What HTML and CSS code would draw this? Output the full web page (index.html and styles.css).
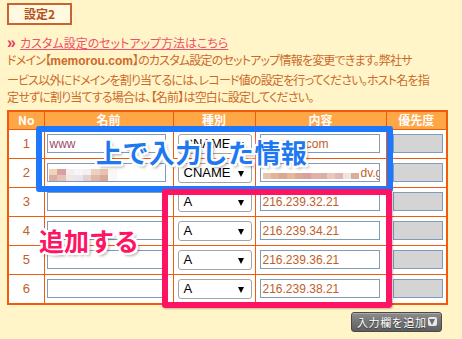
FILE: index.html
```html
<!DOCTYPE html>
<html lang="ja">
<head>
    <meta charset="UTF-8">
    <title>設定2</title>
    <link rel="stylesheet" href="styles.css">
</head>
<body>
    <div class="page">
        <div class="title">設定2</div>
        <p class="guide"><span class="guide-mark">»</span><a href="#">カスタム設定のセットアップ方法はこちら</a></p>
        <p class="desc">ドメイン【<b>memorou.com</b>】のカスタム設定のセットアップ情報を変更できます。弊社サ<br>ービス以外にドメインを割り当てるには、レコード値の設定を行ってください。ホスト名を指<br>定せずに割り当てする場合は、【名前】は空白に設定してください。</p>

        <table class="records">
            <colgroup>
                <col class="col-no">
                <col class="col-name">
                <col class="col-type">
                <col class="col-value">
                <col class="col-prio">
            </colgroup>
            <tr>
                <th>No</th>
                <th>名前</th>
                <th>種別</th>
                <th>内容</th>
                <th>優先度</th>
            </tr>
            <tr>
                <td class="num">1</td>
                <td><div class="field name-www">www</div></td>
                <td><div class="select">CNAME</div></td>
                <td><div class="field value"><span class="blur-short"></span>gle.com</div></td>
                <td><div class="field prio"></div></td>
            </tr>
            <tr>
                <td class="num">2</td>
                <td><div class="field"><div class="mosaic mosaic-name"><i></i><i></i><i></i><i></i><i></i><i></i><i></i><i></i><i></i><i></i><i></i><i></i><i></i><i></i><i></i><i></i></div></div></td>
                <td><div class="select">CNAME</div></td>
                <td><div class="field value"><div class="mosaic mosaic-value"><i></i><i></i><i></i><i></i><i></i><i></i><i></i><i></i><i></i><i></i><i></i><i></i></div>dv.g</div></td>
                <td><div class="field prio"></div></td>
            </tr>
            <tr>
                <td class="num">3</td>
                <td><div class="field"></div></td>
                <td><div class="select">A</div></td>
                <td><div class="field value">216.239.32.21</div></td>
                <td><div class="field prio"></div></td>
            </tr>
            <tr>
                <td class="num">4</td>
                <td><div class="field"></div></td>
                <td><div class="select">A</div></td>
                <td><div class="field value">216.239.34.21</div></td>
                <td><div class="field prio"></div></td>
            </tr>
            <tr>
                <td class="num">5</td>
                <td><div class="field"></div></td>
                <td><div class="select">A</div></td>
                <td><div class="field value">216.239.36.21</div></td>
                <td><div class="field prio"></div></td>
            </tr>
            <tr>
                <td class="num">6</td>
                <td><div class="field"></div></td>
                <td><div class="select">A</div></td>
                <td><div class="field value">216.239.38.21</div></td>
                <td><div class="field prio"></div></td>
            </tr>
        </table>

        <div class="actions">
            <button class="add-row">入力欄を追加<span class="add-arrow"></span></button>
        </div>

        <!-- annotations drawn over the screenshot -->
        <div class="mark mark-blue"></div>
        <div class="mark mark-pink"></div>
        <div class="note note-blue">上で入力した情報</div>
        <div class="note note-pink">追加する</div>
    </div>
</body>
</html>
```

FILE: styles.css
```css
body {
    margin: 0;
    background-color: #fff5c8;
    font-family: "Noto Sans CJK JP", "Liberation Sans", sans-serif;
    font-size: 12px;
    color: #cc6a2a;
}
.page {
    position: relative;
    width: 439px;
    height: 336px;
    padding: 3px 0 0 7px;
}
.title {
    width: 61px;
    height: 18px;
    line-height: 18px;
    border: 2px solid #c8642d;
    background-color: #fff9e2;
    color: #b4501e;
    font-weight: bold;
    font-size: 12px;
    text-align: center;
}
.guide {
    margin: 9px 0 0;
    height: 17px;
    line-height: 17px;
    white-space: nowrap;
    font-feature-settings: "palt";
}
.guide-mark {
    display: inline-block;
    width: 13px;
    color: #e83c64;
    font-family: "Liberation Sans", sans-serif;
    font-weight: bold;
    font-size: 16px;
    line-height: 17px;
    vertical-align: top;
}
.guide a {
    color: #f0506e;
    text-decoration: underline;
}
.desc {
    margin: 0;
    line-height: 17.5px;
    white-space: nowrap;
    letter-spacing: -0.8px;
    font-feature-settings: "palt";
}
.desc b {
    font-family: "Liberation Sans", sans-serif;
    letter-spacing: 0;
}
.records {
    margin-top: 4px;
    width: 439px;
    border-collapse: collapse;
    table-layout: fixed;
    border: 2px solid #f25a0c;
    background-color: #fff;
}
.col-no { width: 36px; }
.col-name { width: 129px; }
.col-type { width: 82px; }
.col-value { width: 131px; }
.col-prio { width: 61px; }
.records th {
    height: 17px;
    padding: 0;
    background-color: #ffa646;
    color: #fff;
    font-weight: bold;
    font-size: 12px;
    line-height: 16px;
    border: 1px solid #f25a0c;
}
.records td {
    height: 28px;
    padding: 0 0 0 2px;
    border: 1px solid #f25a0c;
    vertical-align: middle;
}
.records td.num {
    padding: 0;
    text-align: center;
    font-family: "Liberation Sans", sans-serif;
    font-size: 13px;
    color: #c0602a;
}
.field {
    display: flex;
    align-items: center;
    width: 119px;
    height: 19px;
    box-sizing: border-box;
    border: 1px solid #7f9db9;
    background-color: #fff;
    padding-left: 2px;
    font-family: "Liberation Sans", sans-serif;
    font-size: 12px;
    overflow: hidden;
    white-space: nowrap;
}
.name-www {
    color: #a04870;
}
.records td .value {
    margin-left: 2px;
    width: 120px;
    color: #c0602a;
}
.records td .prio {
    margin-left: 4px;
    width: 50px;
    background-color: #d4d4d4;
}
.select {
    position: relative;
    margin-left: 2px;
    width: 74px;
    height: 20px;
    line-height: 18px;
    box-sizing: border-box;
    border: 1px solid #a5a5a5;
    border-radius: 3px;
    background-color: #fff;
    padding-left: 5px;
    font-family: "Liberation Sans", sans-serif;
    font-size: 13px;
    color: #000;
    overflow: hidden;
    white-space: nowrap;
}
.select::after {
    content: "";
    position: absolute;
    right: 7px;
    top: 7px;
    border-left: 3px solid transparent;
    border-right: 3px solid transparent;
    border-top: 6px solid #000;
}
.blur-short {
    display: inline-block;
    width: 22px;
    height: 8px;
    margin-right: 2px;
    background: linear-gradient(90deg, #f6dede, #f0c8c8 40%, #f8e6e6 70%, #f4d4d4);
}
.mosaic {
    display: grid;
    grid-auto-rows: 6px;
    flex-shrink: 0;
}
.mosaic i {
    display: block;
}
.mosaic-name {
    grid-template-columns: repeat(8, 8.5px);
    margin-left: -1px;
    margin-top: 4px;
}
.mosaic-name i:nth-child(1) { background: #efd5b8; }
.mosaic-name i:nth-child(2) { background: #d9a0a4; }
.mosaic-name i:nth-child(3) { background: #f6eeee; }
.mosaic-name i:nth-child(4) { background: #f7f5f8; }
.mosaic-name i:nth-child(5) { background: #f3f0f2; }
.mosaic-name i:nth-child(6) { background: #ecd0c0; }
.mosaic-name i:nth-child(7) { background: #e6c4b0; }
.mosaic-name i:nth-child(8) { background: #fbf7f4; }
.mosaic-name i:nth-child(9) { background: #dcb0a0; }
.mosaic-name i:nth-child(10) { background: #e8c0b4; }
.mosaic-name i:nth-child(11) { background: #f0e6e6; }
.mosaic-name i:nth-child(12) { background: #ebe4ec; }
.mosaic-name i:nth-child(13) { background: #e4d0cc; }
.mosaic-name i:nth-child(14) { background: #e0b8a8; }
.mosaic-name i:nth-child(15) { background: #d8a898; }
.mosaic-name i:nth-child(16) { background: #fbf7f4; }
.mosaic-value {
    grid-template-columns: repeat(12, 8px);
    margin-top: 6px;
    margin-right: 2px;
}
.mosaic-value i:nth-child(1) { background: #e8c4a8; }
.mosaic-value i:nth-child(2) { background: #e0b494; }
.mosaic-value i:nth-child(3) { background: #d8a890; }
.mosaic-value i:nth-child(4) { background: #e4b898; }
.mosaic-value i:nth-child(5) { background: #dca898; }
.mosaic-value i:nth-child(6) { background: #d8a0a0; }
.mosaic-value i:nth-child(7) { background: #e4b0a8; }
.mosaic-value i:nth-child(8) { background: #dcb0a0; }
.mosaic-value i:nth-child(9) { background: #e8c8c0; }
.mosaic-value i:nth-child(10) { background: #e0b8b0; }
.mosaic-value i:nth-child(11) { background: #f0e4e0; }
.mosaic-value i:nth-child(12) { background: #dcac9c; }
.actions {
    display: flex;
    justify-content: flex-end;
    padding-right: 4px;
    margin-top: 7px;
}
.add-row {
    display: flex;
    align-items: center;
    width: 91px;
    height: 20px;
    padding: 0 0 0 5px;
    border: 1px solid #4a4a4a;
    border-radius: 3px;
    background: linear-gradient(#8c8c8c, #5e5e5e);
    color: #fff;
    font-family: "Noto Sans CJK JP", sans-serif;
    font-size: 11px;
    letter-spacing: 0.6px;
    white-space: nowrap;
    text-shadow: 0 1px 1px #333;
    box-shadow: inset 0 1px 0 #a8a8a8;
}
.add-arrow {
    position: relative;
    flex-shrink: 0;
    width: 9px;
    height: 9px;
    margin-left: 1px;
    border-radius: 2px;
    background-color: #e8e8e8;
}
.add-arrow::after {
    content: "";
    position: absolute;
    left: 1px;
    top: 2px;
    border-left: 3.5px solid transparent;
    border-right: 3.5px solid transparent;
    border-top: 6px solid #6a6a6a;
}
.mark {
    position: absolute;
    box-sizing: border-box;
    border-width: 6px;
    border-style: solid;
    border-radius: 3px;
}
.mark-blue {
    left: 36px;
    top: 126px;
    width: 357px;
    height: 66px;
    border-color: #1e78ff;
}
.mark-pink {
    left: 162px;
    top: 189px;
    width: 230px;
    height: 119px;
    border-color: #ff1464;
    box-shadow: 1px 1px 2px rgba(0, 0, 0, 0.25);
}
.note {
    position: absolute;
    font-family: "Noto Sans CJK JP", sans-serif;
    font-weight: bold;
    line-height: 1;
    white-space: nowrap;
    text-shadow:
        2px 0 0 #fff, -2px 0 0 #fff, 0 2px 0 #fff, 0 -2px 0 #fff,
        2px 2px 0 #fff, -2px 2px 0 #fff, 2px -2px 0 #fff, -2px -2px 0 #fff,
        3px 3px 3px rgba(0, 0, 0, 0.35);
}
.note-blue {
    left: 96px;
    top: 139px;
    font-size: 26px;
    letter-spacing: 0.4px;
    color: #1e78f0;
}
.note-pink {
    left: 39px;
    top: 228px;
    font-size: 25px;
    color: #ff1464;
}
```
